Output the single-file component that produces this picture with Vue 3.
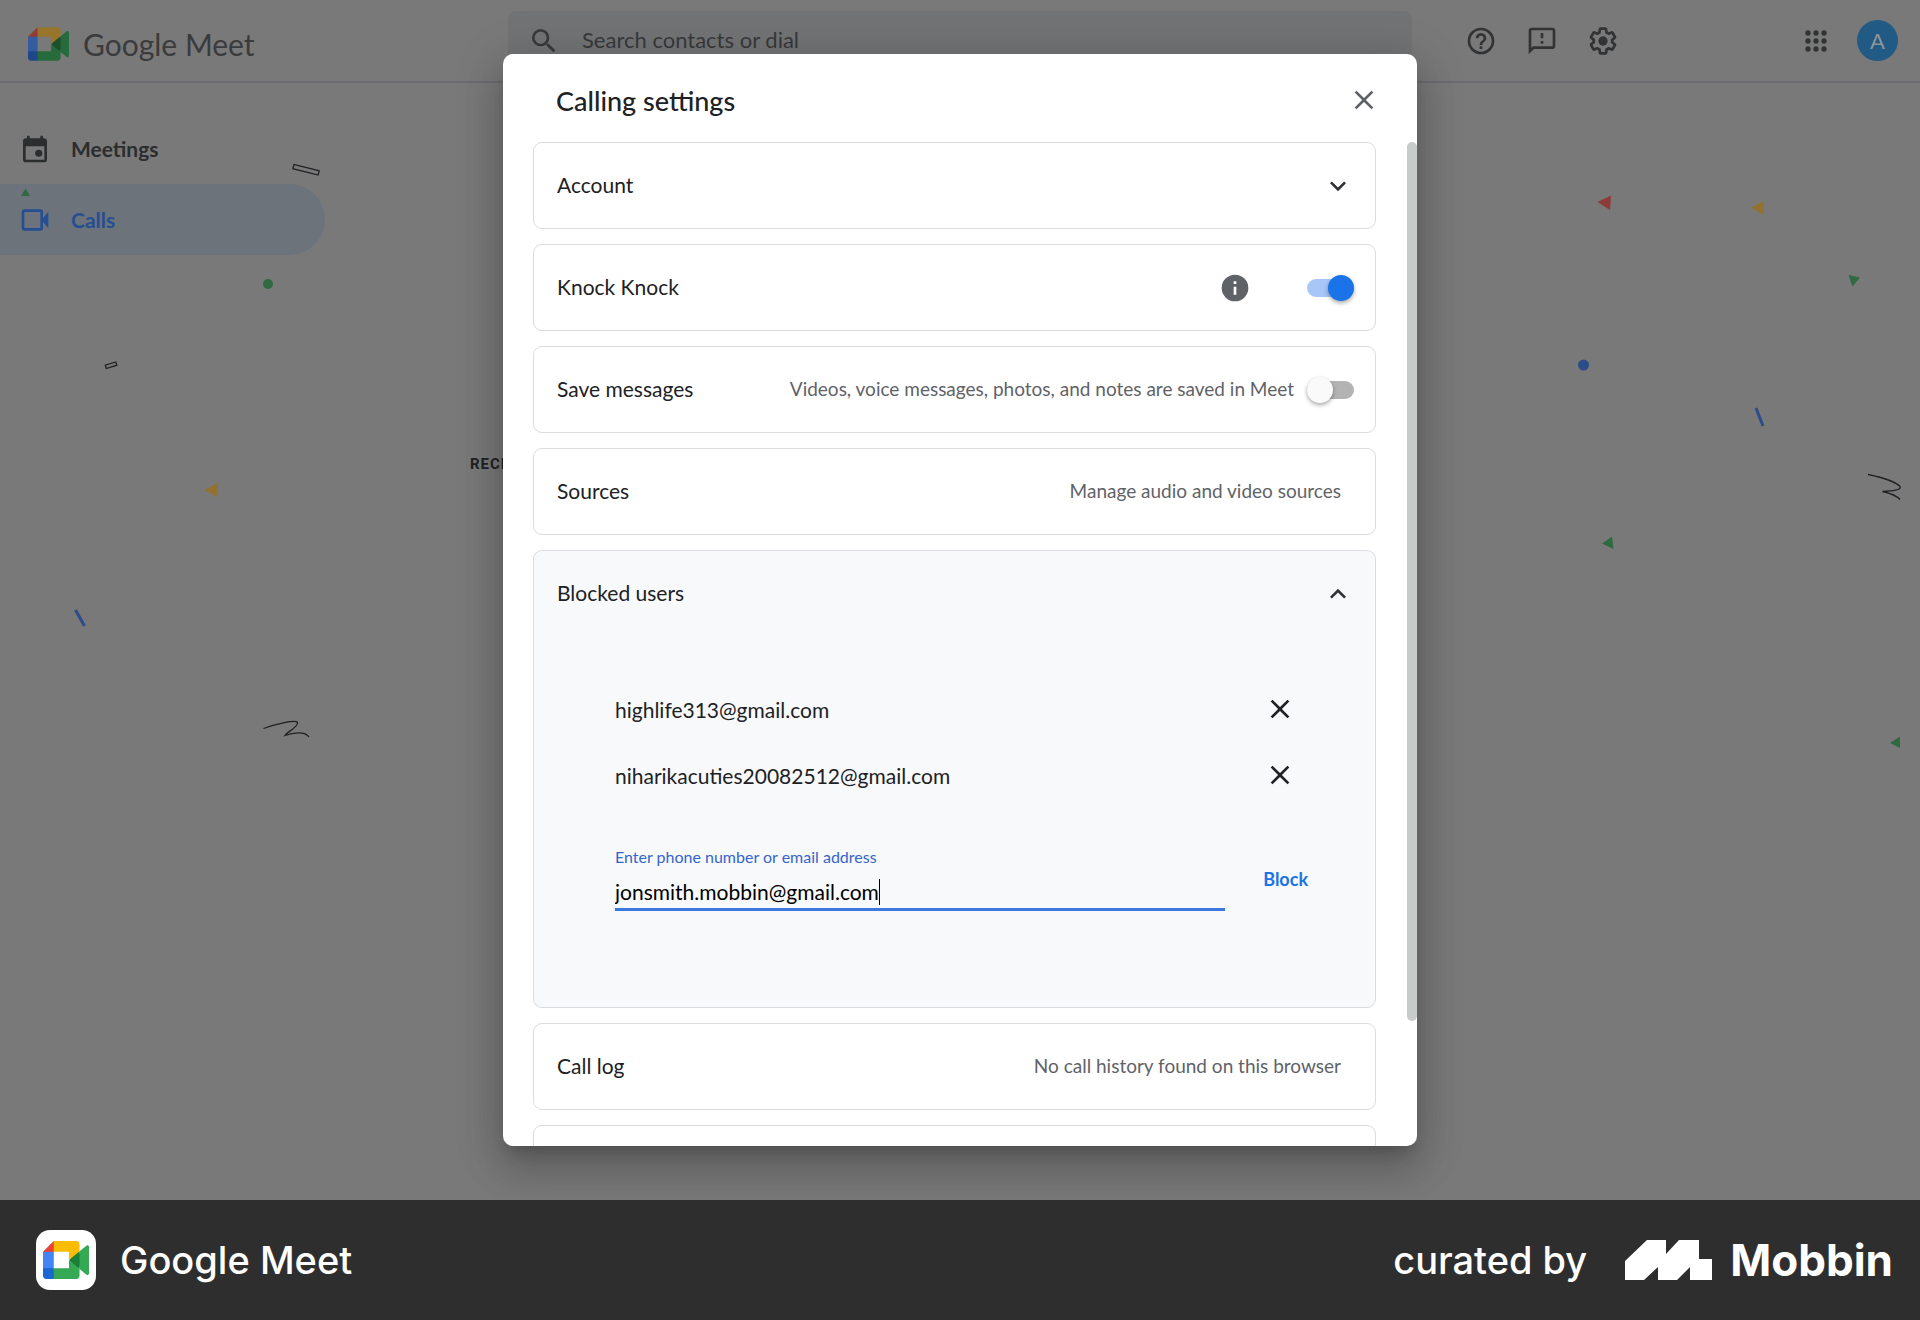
<script setup>
import { ref } from 'vue';

const knockKnock = ref(true);
const saveMessages = ref(false);
const entry = ref('jonsmith.mobbin@gmail.com');
const blocked = ref(['highlife313@gmail.com', 'niharikacuties20082512@gmail.com']);

const unblock = (email) => {
    blocked.value = blocked.value.filter((item) => item !== email);
};

const block = () => {
    if (entry.value) {
        blocked.value.push(entry.value);
        entry.value = '';
    }
};
</script>

<template>
    <div class="page">
        <div class="app">
            <header class="header">
                <a class="brand" href="#">
                    <svg class="brand-logo" viewBox="0 0 87.5 72" aria-hidden="true">
                        <path fill="#1d4f2a" d="M49.5 36l8.53 9.75 11.47 7.33 2-17.02-2-16.64-11.69 6.44z" />
                        <path fill="#1f4788" d="M0 51.5V66c0 3.315 2.685 6 6 6h14.5l3-10.96-3-9.54-9.95-3z" />
                        <path fill="#8f3d35" d="M20.5 0L0 20.5l10.55 3 9.95-3 2.95-9.41z" />
                        <path fill="#345c9f" d="M20.5 20.5H0v31h20.5z" />
                        <path fill="#256b3c" d="M82.6 8.68L69.5 19.42v33.66l13.16 10.79c1.97 1.54 4.85.135 4.85-2.37V11c0-2.535-2.945-3.925-4.91-2.32zM49.5 36v15.5h-29V72h43c3.315 0 6-2.685 6-6V53.08z" />
                        <path fill="#97762c" d="M63.5 0h-43v20.5h29V36l20-16.57V6c0-3.315-2.685-6-6-6z" />
                    </svg>
                    <span class="brand-name">Google Meet</span>
                </a>
                <label class="search">
                    <svg class="icon" viewBox="0 0 24 24" aria-hidden="true">
                        <path d="M15.5 14h-.79l-.28-.27A6.47 6.47 0 0 0 16 9.5 6.5 6.5 0 1 0 9.5 16c1.61 0 3.09-.59 4.23-1.57l.27.28v.79l5 4.99L20.49 19zm-6 0C7.01 14 5 11.99 5 9.5S7.01 5 9.5 5 14 7.01 14 9.5 11.99 14 9.5 14z" />
                    </svg>
                    <input type="text" placeholder="Search contacts or dial" aria-label="Search contacts or dial" />
                </label>
                <div class="tools">
                    <button type="button" aria-label="Help">
                        <svg class="icon" viewBox="0 0 24 24">
                            <path d="M11 18h2v-2h-2zm1-16a10 10 0 1 0 0 20 10 10 0 0 0 0-20zm0 18c-4.41 0-8-3.59-8-8s3.59-8 8-8 8 3.59 8 8-3.59 8-8 8zm0-14a4 4 0 0 0-4 4h2c0-1.1.9-2 2-2s2 .9 2 2c0 2-3 1.75-3 5h2c0-2.25 3-2.5 3-5a4 4 0 0 0-4-4z" />
                        </svg>
                    </button>
                    <button type="button" aria-label="Feedback">
                        <svg class="icon" viewBox="0 0 24 24">
                            <path d="M20 2H4c-1.1 0-2 .9-2 2v18l4-4h14c1.1 0 2-.9 2-2V4c0-1.1-.9-2-2-2zm0 14H5.17L4 17.17V4h16zM11 12h2v2h-2zm0-6h2v4h-2z" />
                        </svg>
                    </button>
                    <button type="button" aria-label="Settings">
                        <svg class="icon" viewBox="0 0 24 24">
                            <path d="M13.85 22.25h-3.7c-.74 0-1.36-.54-1.45-1.27l-.27-1.89c-.27-.14-.53-.29-.79-.46l-1.8.72c-.7.26-1.47-.03-1.81-.65L2.2 15.53c-.35-.66-.2-1.44.36-1.88l1.53-1.19c-.01-.15-.02-.3-.02-.46 0-.15.01-.31.02-.46l-1.52-1.19c-.59-.45-.74-1.26-.37-1.88l1.85-3.19c.34-.62 1.11-.9 1.79-.63l1.81.73c.26-.17.52-.32.78-.46l.27-1.91c.09-.7.71-1.25 1.44-1.25h3.7c.74 0 1.36.54 1.45 1.27l.27 1.89c.27.14.53.29.79.46l1.8-.72c.71-.26 1.48.03 1.82.65l1.84 3.18c.36.66.2 1.44-.36 1.88l-1.52 1.19c.01.15.02.3.02.46s-.01.31-.02.46l1.52 1.19c.56.45.72 1.23.37 1.86l-1.86 3.22c-.34.62-1.11.9-1.8.63l-1.8-.72c-.26.17-.52.32-.78.46l-.27 1.91c-.1.68-.72 1.22-1.46 1.22zm-3.23-2h2.76l.37-2.55.53-.22c.44-.18.88-.44 1.34-.78l.45-.34 2.38.96 1.38-2.4-2.03-1.58.07-.56c.03-.26.06-.51.06-.78s-.03-.53-.06-.78l-.07-.56 2.03-1.58-1.39-2.4-2.39.96-.45-.35c-.42-.32-.87-.58-1.33-.77l-.52-.22-.37-2.55h-2.76l-.37 2.55-.53.21c-.44.19-.88.44-1.34.79l-.45.33-2.38-.95-1.39 2.39 2.03 1.58-.07.56a7 7 0 0 0-.06.79c0 .26.02.53.06.78l.07.56-2.03 1.58 1.38 2.4 2.39-.96.45.35c.43.33.86.58 1.33.77l.53.22z" />
                            <circle cx="12" cy="12" r="3.5" />
                        </svg>
                    </button>
                    <button class="apps" type="button" aria-label="Google apps">
                        <svg class="icon" viewBox="0 0 24 24">
                            <path d="M6 8a2 2 0 1 0 0-4 2 2 0 0 0 0 4zm6 12a2 2 0 1 0 0-4 2 2 0 0 0 0 4zm-6 0a2 2 0 1 0 0-4 2 2 0 0 0 0 4zm0-6a2 2 0 1 0 0-4 2 2 0 0 0 0 4zm6 0a2 2 0 1 0 0-4 2 2 0 0 0 0 4zm6-6a2 2 0 1 0 0-4 2 2 0 0 0 0 4zm-6 0a2 2 0 1 0 0-4 2 2 0 0 0 0 4zm6 6a2 2 0 1 0 0-4 2 2 0 0 0 0 4zm0 6a2 2 0 1 0 0-4 2 2 0 0 0 0 4z" />
                        </svg>
                    </button>
                    <button class="avatar" type="button">A</button>
                </div>
            </header>

            <div class="body">
                <nav class="sidebar">
                    <a class="nav-item" href="#">
                        <svg class="icon" viewBox="0 0 24 24" aria-hidden="true">
                            <path d="M19 4h-1V2h-2v2H8V2H6v2H5c-1.11 0-2 .9-2 2v14c0 1.1.89 2 2 2h14c1.1 0 2-.9 2-2V6c0-1.1-.9-2-2-2zm0 16H5V10h14z" />
                            <circle cx="14.8" cy="15.2" r="2.7" />
                        </svg>
                        Meetings
                    </a>
                    <a class="nav-item active" href="#">
                        <svg class="icon" viewBox="0 0 24 24" aria-hidden="true">
                            <path d="M18 10.5V6c0-1.1-.9-2-2-2H4c-1.1 0-2 .9-2 2v12c0 1.1.9 2 2 2h12c1.1 0 2-.9 2-2v-4.5l4 4.5V6zM16 18H4V6h12z" />
                        </svg>
                        Calls
                    </a>
                </nav>
                <main class="content">
                    <h2>RECENT</h2>
                </main>
            </div>

            <svg class="confetti" viewBox="0 0 1920 1200" preserveAspectRatio="xMidYMin slice" aria-hidden="true">
                <g fill="none" stroke="#202124" stroke-width="1.3">
                    <rect x="293" y="167.5" width="26" height="4.5" transform="rotate(14 306 170)" />
                    <rect x="105.5" y="363.5" width="11" height="3.5" transform="rotate(-17 111 365)" />
                    <path d="M263.5 728.5C275 724.5 296 719 297.5 722.5C298.5 727 287 732 285 735.5C293 732.5 305 731 309 737" />
                    <path d="M1868 474.5C1880 477 1895 481 1900 486.5C1902 490 1892 491 1882.5 491.5C1889 493 1896 495 1900 499.5" />
                </g>
                <g fill="#2f6a41">
                    <path d="M25.5 188.5L30 196H21zM1848.5 275L1860 277.5L1852.5 286.5zM1602 543.5L1612 536.5L1613.5 549zM1890 743L1900 736.5V748z" />
                    <circle cx="268" cy="284" r="5" />
                </g>
                <path fill="#8d3b37" d="M1597.5 202L1611 195.5L1610 210z" />
                <path fill="#94712f" d="M1751 207.5L1764 201L1763.5 215zM204.5 490L218 483L217.5 497z" />
                <circle fill="#2c4c8a" cx="1583.5" cy="365" r="5.5" />
                <path stroke="#2c4c8a" stroke-width="3" d="M75.5 610L84.5 626M1756 408L1763 426" />
            </svg>

            <div class="overlay">
                <section class="dialog" role="dialog" aria-labelledby="dialog-title">
                    <div class="dialog-head">
                        <h1 id="dialog-title">Calling settings</h1>
                        <button class="close" type="button" aria-label="Close">
                            <svg class="icon" viewBox="0 0 24 24"><path d="M19 6.41L17.59 5 12 10.59 6.41 5 5 6.41 10.59 12 5 17.59 6.41 19 12 13.41 17.59 19 19 17.59 13.41 12z" /></svg>
                        </button>
                    </div>
                    <div class="dialog-body">
                        <div class="cards">
                            <div class="card">
                                <button class="row" type="button">
                                    <span class="row-title">Account</span>
                                    <svg class="icon chevron" viewBox="0 0 24 24"><path d="M7.41 8.59L12 13.17l4.59-4.58L18 10l-6 6-6-6z" /></svg>
                                </button>
                            </div>
                            <div class="card">
                                <div class="row">
                                    <label class="row-title" for="knock">Knock Knock</label>
                                    <svg class="icon info" viewBox="0 0 24 24"><path d="M12 2a10 10 0 1 0 0 20 10 10 0 0 0 0-20zm1 15h-2v-6h2zm0-8h-2V7h2z" /></svg>
                                    <input id="knock" v-model="knockKnock" class="switch" type="checkbox" />
                                </div>
                            </div>
                            <div class="card">
                                <div class="row">
                                    <label class="row-title" for="save">Save messages</label>
                                    <span class="row-note">Videos, voice messages, photos, and notes are saved in Meet</span>
                                    <input id="save" v-model="saveMessages" class="switch" type="checkbox" />
                                </div>
                            </div>
                            <div class="card">
                                <div class="row">
                                    <span class="row-title">Sources</span>
                                    <span class="row-note inset">Manage audio and video sources</span>
                                </div>
                            </div>
                            <div class="card open">
                                <button class="row" type="button">
                                    <span class="row-title">Blocked users</span>
                                    <svg class="icon chevron" viewBox="0 0 24 24"><path d="M12 8l-6 6 1.41 1.41L12 10.83l4.59 4.58L18 14z" /></svg>
                                </button>
                                <div class="blocked">
                                    <ul>
                                        <li v-for="email in blocked" :key="email">
                                            <span>{{ email }}</span>
                                            <button type="button" :aria-label="`Unblock ${email}`" @click="unblock(email)">
                                                <svg class="icon" viewBox="0 0 24 24"><path d="M19 6.41L17.59 5 12 10.59 6.41 5 5 6.41 10.59 12 5 17.59 6.41 19 12 13.41 17.59 19 19 17.59 13.41 12z" /></svg>
                                            </button>
                                        </li>
                                    </ul>
                                    <form class="block-form" @submit.prevent="block">
                                        <div class="field">
                                            <label for="entry">Enter phone number or email address</label>
                                            <div class="field-line">
                                                <input id="entry" v-model="entry" type="text" />
                                                <span class="caret"></span>
                                            </div>
                                        </div>
                                        <button type="submit">Block</button>
                                    </form>
                                </div>
                            </div>
                            <div class="card">
                                <div class="row">
                                    <span class="row-title">Call log</span>
                                    <span class="row-note inset">No call history found on this browser</span>
                                </div>
                            </div>
                            <div class="card">
                                <div class="row"></div>
                            </div>
                        </div>
                        <div class="scroll-thumb"></div>
                    </div>
                </section>
            </div>
        </div>

        <footer class="footer">
            <span class="app-icon">
                <svg viewBox="0 0 87.5 72" aria-hidden="true">
                    <path fill="#188038" d="M49.5 36l8.53 9.75 11.47 7.33 2-17.02-2-16.64-11.69 6.44z" />
                    <path fill="#1967d2" d="M0 51.5V66c0 3.315 2.685 6 6 6h14.5l3-10.96-3-9.54-9.95-3z" />
                    <path fill="#ea4335" d="M20.5 0L0 20.5l10.55 3 9.95-3 2.95-9.41z" />
                    <path fill="#4285f4" d="M20.5 20.5H0v31h20.5z" />
                    <path fill="#34a853" d="M82.6 8.68L69.5 19.42v33.66l13.16 10.79c1.97 1.54 4.85.135 4.85-2.37V11c0-2.535-2.945-3.925-4.91-2.32zM49.5 36v15.5h-29V72h43c3.315 0 6-2.685 6-6V53.08z" />
                    <path fill="#fbbc04" d="M63.5 0h-43v20.5h29V36l20-16.57V6c0-3.315-2.685-6-6-6z" />
                </svg>
            </span>
            <span class="app-name">Google Meet</span>
            <span class="curated">curated by</span>
            <svg class="mobbin-mark" viewBox="0 0 87 40" aria-hidden="true">
                <path fill="#fff" d="M0 21L22 0H41V14L54 0H74V19H87V40H65V27L52 40H33V27L19 40H0z" />
            </svg>
            <span class="mobbin">Mobbin</span>
        </footer>
    </div>
</template>

<style>
body {
    margin: 0;
    background: #2e2e2e;
}
</style>

<style scoped>
* {
    box-sizing: border-box;
}

.page {
    display: flex;
    flex-direction: column;
    min-height: 100vh;
    font-family: Lato, "Open Sans", sans-serif;
    font-size: 21px;
    color: #202124;
}

button,
input {
    font: inherit;
    color: inherit;
    border: 0;
    padding: 0;
    background: none;
    outline: none;
}

button {
    cursor: pointer;
}

a {
    color: inherit;
    text-decoration: none;
}

.icon {
    display: block;
    flex: none;
    width: 32px;
    height: 32px;
    fill: currentColor;
}

.app {
    position: relative;
    flex: 1;
    display: flex;
    flex-direction: column;
    background: #797979;
    overflow: hidden;
}

.header {
    display: grid;
    grid-template-columns: 508px 1fr 508px;
    height: 83px;
    border-bottom: 2px solid #6a6c70;
}

.brand {
    display: flex;
    align-items: center;
    gap: 14px;
    padding: 6px 0 0 28px;
    color: #3a3b3d;
}

.brand-logo {
    width: 41px;
    height: 34px;
}

.brand-name {
    font-size: 30px;
}

.search {
    display: flex;
    align-items: center;
    gap: 22px;
    margin-top: 11px;
    padding-left: 20px;
    height: 59px;
    border-radius: 8px;
    background: #727374;
    color: #38393b;
    font-size: 22px;
}

.search input {
    flex: 1;
    padding-bottom: 2px;
}

.search input::placeholder {
    color: #38393b;
    opacity: 1;
}

.tools {
    display: flex;
    align-items: center;
    gap: 29px;
    padding: 0 22px 0 53px;
    color: #323335;
}

.apps {
    margin-left: auto;
}

.avatar {
    width: 41px;
    height: 41px;
    margin-left: -4px;
    border-radius: 50%;
    background: #215a84;
    color: #8f9498;
    font-size: 22px;
}

.body {
    display: flex;
    flex: 1;
}

.sidebar {
    width: 325px;
    padding-top: 30px;
}

.nav-item {
    display: flex;
    align-items: center;
    gap: 20px;
    height: 71px;
    padding-left: 19px;
    font-weight: 700;
    color: #2b2d2f;
}

.active {
    border-radius: 0 36px 36px 0;
    background: #6c737b;
    color: #264f93;
}

.content {
    flex: 1;
    padding: 371px 0 0 145px;
}

.content h2 {
    margin: 0;
    font: 700 15px/20px Roboto, sans-serif;
    letter-spacing: 1px;
}

/* decorative shapes scattered over the page canvas */
.confetti {
    position: absolute;
    inset: 0;
    width: 100%;
    height: 100%;
    pointer-events: none;
}

.overlay {
    position: absolute;
    inset: 0;
    display: flex;
    justify-content: center;
    padding: 54px 24px;
}

.dialog {
    display: flex;
    flex-direction: column;
    width: 914px;
    max-width: 100%;
    border-radius: 10px;
    background: #fff;
    overflow: hidden;
    box-shadow: 0 11px 15px -7px rgba(0, 0, 0, 0.2), 0 24px 38px 3px rgba(0, 0, 0, 0.14), 0 9px 46px 8px rgba(0, 0, 0, 0.12);
}

.dialog-head {
    flex: none;
    display: flex;
    align-items: center;
    justify-content: space-between;
    height: 88px;
    padding: 4px 37px 0 53px;
}

.dialog-head h1 {
    margin: 0;
    font-size: 27px;
    font-weight: 500;
}

.close {
    color: #5f6368;
}

.dialog-body {
    position: relative;
    flex: 1;
    min-height: 0;
}

.cards {
    display: flex;
    flex-direction: column;
    gap: 15px;
    height: 100%;
    padding: 0 41px 0 30px;
    overflow-y: auto;
    scrollbar-width: none;
}

.scroll-thumb {
    position: absolute;
    top: 0;
    right: 0;
    width: 10px;
    height: 87.5%;
    border-radius: 5px;
    background: #c9caca;
}

.card {
    flex: none;
    border: 1px solid #dadce0;
    border-radius: 9px;
}

.open {
    min-height: 458px;
    background: #f8f9fb;
}

.row {
    display: flex;
    align-items: center;
    width: 100%;
    height: 85px;
    padding: 0 21px 0 23px;
    text-align: left;
}

.row-title {
    margin-right: auto;
    padding-bottom: 2px;
}

.row-note {
    padding-bottom: 2px;
    font-size: 19px;
    color: #5f6368;
}

.inset {
    padding-right: 13px;
}

.chevron {
    color: #303134;
}

.info {
    margin-right: 43px;
    color: #5f6368;
}

.switch {
    appearance: none;
    display: flex;
    align-items: center;
    width: 47px;
    height: 18px;
    margin: 0 0 0 13px;
    border-radius: 9px;
    background: #b3b3b3;
    cursor: pointer;
}

.switch::before {
    content: "";
    flex: none;
    width: 26px;
    height: 26px;
    border-radius: 50%;
    background: #fafafa;
    box-shadow: 0 2px 4px rgba(0, 0, 0, 0.35);
}

.switch:checked {
    justify-content: flex-end;
    background: #a9c6f8;
}

.switch:checked::before {
    background: #1a73e8;
}

.blocked {
    padding: 40px 67px 0 81px;
}

.blocked ul {
    margin: 0;
    padding: 0;
    list-style: none;
}

.blocked li {
    display: flex;
    align-items: center;
    justify-content: space-between;
    height: 66px;
    padding-right: 12px;
}

.block-form {
    display: flex;
    align-items: center;
    gap: 38px;
    margin-top: 39px;
}

.field {
    flex: 1;
}

.field label {
    display: block;
    font-size: 16px;
    line-height: 20px;
    color: #3565cb;
}

.field-line {
    display: flex;
    align-items: center;
    height: 44px;
    padding-top: 8px;
    border-bottom: 3px solid #3b78e0;
    color: #000;
}

.field-line input {
    field-sizing: content;
    height: 32px;
}

.caret {
    width: 1px;
    height: 26px;
    background: #000;
}

.block-form button {
    font-size: 18px;
    font-weight: 700;
    color: #1a73e8;
}

.footer {
    flex: none;
    display: flex;
    align-items: center;
    height: 120px;
    padding: 0 27px 0 36px;
    background: #2e2e2e;
    color: #fff;
    font-family: Inter, sans-serif;
    font-size: 38px;
    font-weight: 500;
}

.app-icon {
    display: flex;
    align-items: center;
    justify-content: center;
    width: 60px;
    height: 60px;
    border-radius: 14px;
    background: #fff;
}

.app-icon svg {
    width: 46px;
    height: 38px;
}

.app-name {
    margin-left: 24px;
}

.curated {
    margin-left: auto;
}

.mobbin-mark {
    width: 87px;
    height: 40px;
    margin: 0 18px 0 38px;
}

.mobbin {
    font-size: 44px;
    font-weight: 700;
}
</style>
